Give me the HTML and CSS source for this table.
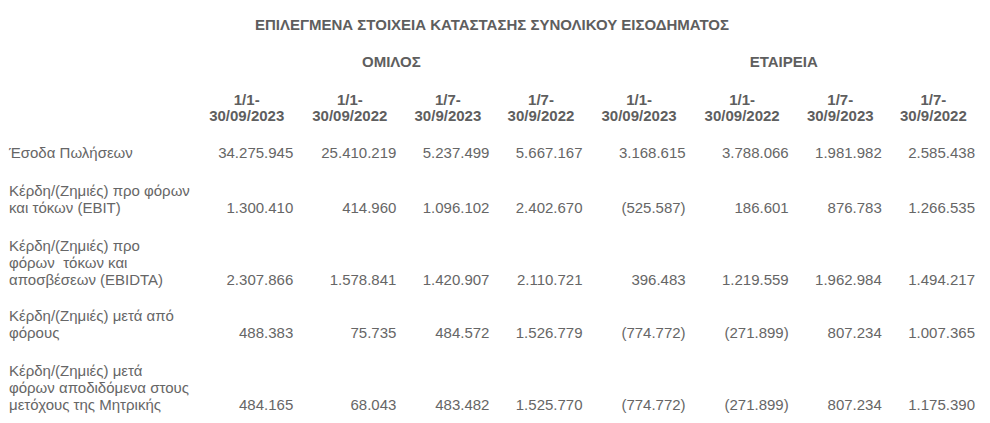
FILE: index.html
```html
<!DOCTYPE html>
<html lang="el">
<head>
<meta charset="utf-8">
<title>Επιλεγμένα στοιχεία</title>
<link rel="stylesheet" href="styles.css">
</head>
<body>
<table class="fin">
  <colgroup>
    <col class="c-label">
    <col class="c-w"><col class="c-w"><col class="c-n"><col class="c-n">
    <col class="c-w"><col class="c-w"><col class="c-n"><col class="c-n">
  </colgroup>
  <thead>
    <tr>
      <th class="title" colspan="9">ΕΠΙΛΕΓΜΕΝΑ ΣΤΟΙΧΕΙΑ ΚΑΤΑΣΤΑΣΗΣ ΣΥΝΟΛΙΚΟΥ ΕΙΣΟΔΗΜΑΤΟΣ</th>
    </tr>
    <tr>
      <th></th>
      <th class="group" colspan="4">ΟΜΙΛΟΣ</th>
      <th class="group" colspan="4">ΕΤΑΙΡΕΙΑ</th>
    </tr>
    <tr class="dates">
      <th></th>
      <th>1/1-<br>30/09/2023</th>
      <th>1/1-<br>30/09/2022</th>
      <th>1/7-<br>30/9/2023</th>
      <th>1/7-<br>30/9/2022</th>
      <th>1/1-<br>30/09/2023</th>
      <th>1/1-<br>30/09/2022</th>
      <th>1/7-<br>30/9/2023</th>
      <th>1/7-<br>30/9/2022</th>
    </tr>
  </thead>
  <tbody>
    <tr>
      <td class="label">Έσοδα Πωλήσεων</td>
      <td>34.275.945</td><td>25.410.219</td><td>5.237.499</td><td>5.667.167</td>
      <td>3.168.615</td><td>3.788.066</td><td>1.981.982</td><td>2.585.438</td>
    </tr>
    <tr>
      <td class="label">Κέρδη/(Ζημιές) προ φόρων<br>και τόκων (EBIT)</td>
      <td>1.300.410</td><td>414.960</td><td>1.096.102</td><td>2.402.670</td>
      <td>(525.587)</td><td>186.601</td><td>876.783</td><td>1.266.535</td>
    </tr>
    <tr class="tight">
      <td class="label">Κέρδη/(Ζημιές) προ<br>φόρων&nbsp; τόκων και<br>αποσβέσεων (EBIDTA)</td>
      <td>2.307.866</td><td>1.578.841</td><td>1.420.907</td><td>2.110.721</td>
      <td>396.483</td><td>1.219.559</td><td>1.962.984</td><td>1.494.217</td>
    </tr>
    <tr>
      <td class="label">Κέρδη/(Ζημιές) μετά από<br>φόρους</td>
      <td>488.383</td><td>75.735</td><td>484.572</td><td>1.526.779</td>
      <td>(774.772)</td><td>(271.899)</td><td>807.234</td><td>1.007.365</td>
    </tr>
    <tr>
      <td class="label">Κέρδη/(Ζημιές) μετά<br>φόρων αποδιδόμενα στους<br>μετόχους της Μητρικής</td>
      <td>484.165</td><td>68.043</td><td>483.482</td><td>1.525.770</td>
      <td>(774.772)</td><td>(271.899)</td><td>807.234</td><td>1.175.390</td>
    </tr>
  </tbody>
</table>
</body>
</html>
```

FILE: styles.css
```css
html, body {
  margin: 0;
  padding: 0;
  background: #ffffff;
}

body {
  padding: 6px 0 0 4px;
  font-family: "Liberation Sans", Arial, sans-serif;
  font-size: 15px;
  line-height: 17px;
  color: #666666;
}

.fin {
  border-collapse: collapse;
  table-layout: fixed;
  width: 976px;
}

.c-label { width: 191px; }
.c-w { width: 103px; }
.c-n { width: 93px; }

.fin th,
.fin td {
  padding: 10px 5px 10px 5px;
}

.fin th {
  font-weight: bold;
  color: #5e5e5e;
  text-align: center;
  vertical-align: bottom;
}

.fin .dates th {
  line-height: 16px;
  padding-top: 12px;
}

.fin td {
  text-align: right;
  vertical-align: bottom;
  padding-bottom: 11px;
  white-space: nowrap;
}

.fin td.label {
  text-align: left;
  vertical-align: top;
  white-space: normal;
}

.fin .tight td {
  padding-bottom: 9px;
}
```
